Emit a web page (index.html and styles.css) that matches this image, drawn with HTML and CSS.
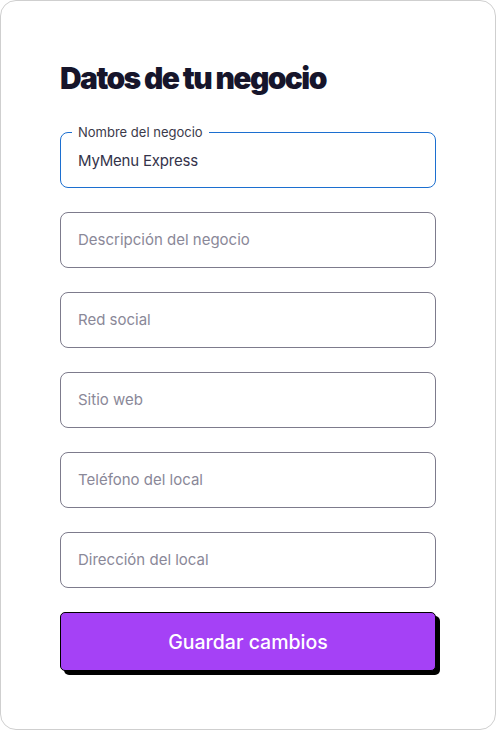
FILE: index.html
```html
<!DOCTYPE html>
<html lang="es">
<head>
<meta charset="utf-8">
<link rel="stylesheet" href="styles.css">
</head>
<body>
<div class="card">
  <h1 class="title">Datos de tu negocio</h1>
  <form class="form">
    <fieldset class="field field-active">
      <legend class="field-label">Nombre del negocio</legend>
      <span class="field-value">MyMenu Express</span>
    </fieldset>
    <div class="field"><span class="field-placeholder">Descripción del negocio</span></div>
    <div class="field"><span class="field-placeholder">Red social</span></div>
    <div class="field"><span class="field-placeholder">Sitio web</span></div>
    <div class="field"><span class="field-placeholder">Teléfono del local</span></div>
    <div class="field"><span class="field-placeholder">Dirección del local</span></div>
    <button type="button" class="save-btn">Guardar cambios</button>
  </form>
</div>
</body>
</html>
```
FILE: styles.css
```css
html, body {
  margin: 0;
  padding: 0;
  background: #ffffff;
}
body {
  font-family: "Inter", "Liberation Sans", sans-serif;
}
.card {
  box-sizing: border-box;
  width: 496px;
  height: 730px;
  border: 1px solid #cfcfcf;
  border-radius: 16px;
  padding: 59px 59px 0 59px;
  background: #fff;
}
.title {
  margin: 0 0 29px 0;
  font-size: 30px;
  line-height: 36px;
  font-weight: 900;
  letter-spacing: -1.6px;
  color: #16152b;
}
.form {
  display: flex;
  flex-direction: column;
  gap: 24px;
}
.field {
  box-sizing: border-box;
  height: 56px;
  margin: 0;
  border: 1px solid #7d7b8c;
  border-radius: 8px;
  padding: 0 17px;
  display: flex;
  align-items: center;
  min-width: 0;
}
.field-active {
  border-color: #1c6fd0;
  display: block;
  padding: 0 17px;
  height: 63px;
}
.field-label {
  padding: 0 6px;
  margin-left: -6px;
  font-size: 13px;
  line-height: 14px;
  color: #3b3a4a;
}
.field-value {
  display: block;
  margin-top: 12px;
  font-size: 15px;
  line-height: 20px;
  letter-spacing: -0.2px;
  color: #34334a;
}
.field-placeholder {
  font-size: 15px;
  line-height: 20px;
  color: #8a8898;
}
.save-btn {
  box-sizing: border-box;
  height: 59px;
  border: 1px solid #000;
  border-radius: 5px;
  background: #a541f6;
  box-shadow: 4px 4px 0 #000;
  color: #fff;
  font-family: "Inter", "Liberation Sans", sans-serif;
  font-size: 19.5px;
  font-weight: 500;
  cursor: pointer;
}
```
